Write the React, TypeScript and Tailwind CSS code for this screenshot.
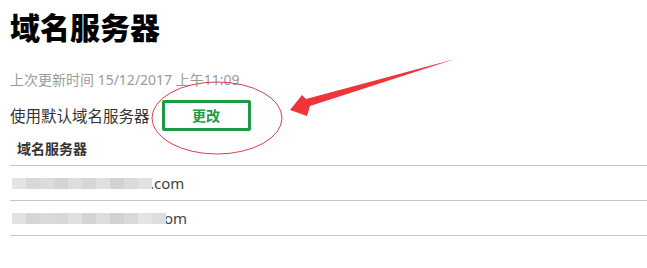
const blocks1 = ['#e4e4e4', '#d8d8d8', '#dcdcdc', '#d4d4d4', '#dedede', '#d6d6d6', '#e0e0e0', '#d2d2d2', '#dadada', '#e2e2e2'];
const blocks2 = ['#e2e2e2', '#d6d6d6', '#dadada', '#d8d8d8', '#e0e0e0', '#d4d4d4', '#dddddd', '#d2d2d2', '#d9d9d9', '#e4e4e4', '#dedede'];

const Blur = ({ shades }: { shades: string[] }) => (
  <div className="flex h-[11px] blur-[0.6px]">
    {shades.map((c, i) => (
      <div key={i} className="w-[14px] h-full" style={{ backgroundColor: c }} />
    ))}
  </div>
);

export default function App() {
  return (
    <div
      className="relative w-[647px] h-[268px] bg-white overflow-hidden text-[#333]"
      style={{ fontFamily: '"Noto Sans", "Noto Sans CJK SC", sans-serif' }}
    >
      <div className="pl-[10px] pt-[12px]">
        {/* Title */}
        <h1 className="text-[30px] leading-[32px] font-black text-black">域名服务器</h1>

        {/* Last updated */}
        <p className="mt-[26px] text-[14px] leading-[20px] text-[#9a9a9a]">上次更新时间 15/12/2017 上午11:09</p>

        {/* Current setting */}
        <div className="flex items-center mt-[10px]">
          <span className="text-[15.5px] leading-[22px] text-[#333]">使用默认域名服务器</span>
          <button className="ml-[12px] w-[89px] h-[31px] border-[3px] border-[#1c9b44] rounded-[2px] text-[14px] font-bold text-[#1c9b44] flex items-center justify-center">
            更改
          </button>
        </div>

        {/* Table */}
        <div>
          <div className="pl-[7px] h-[35px] flex items-center text-[14px] font-bold text-[#333] border-b border-[#c4c4c4]">
            域名服务器
          </div>
          <div className="h-[35px] flex items-center pl-[2px] border-b border-[#c4c4c4]">
            <Blur shades={blocks1} />
            <span className="text-[15px] text-[#444] -ml-[2px]">.com</span>
          </div>
          <div className="h-[35px] flex items-center pl-[2px] border-b border-[#c4c4c4]">
            <Blur shades={blocks2} />
            <span className="text-[15px] text-[#444] -ml-[2px]">om</span>
          </div>
        </div>
      </div>

      {/* Annotation overlay */}
      <svg className="absolute left-0 top-0 pointer-events-none" width="647" height="268" viewBox="0 0 647 268">
        <ellipse cx="217" cy="118" rx="65" ry="36" fill="none" stroke="#d8404a" strokeWidth="1" />
        <path d="M290 110 L302 95 L306 99 L455 59 L310 106 L307 116 Z" fill="#f0353a" />
      </svg>
    </div>
  );
}
